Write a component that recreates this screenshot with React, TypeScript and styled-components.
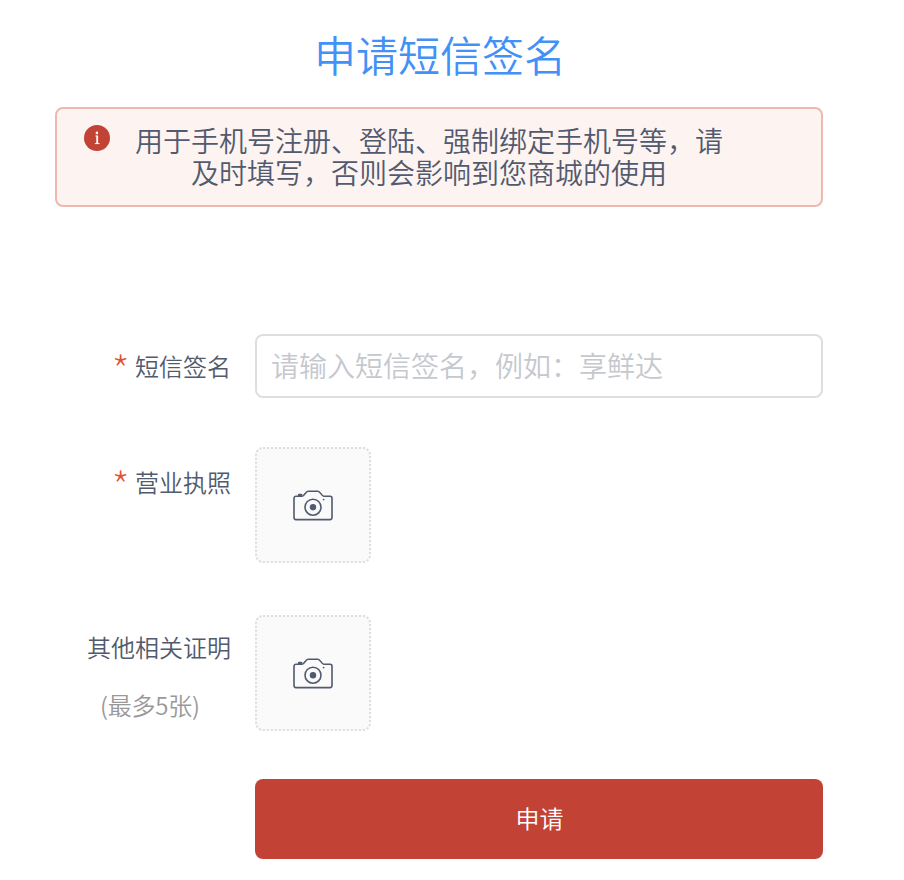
import React from 'react';
import styled, { createGlobalStyle } from 'styled-components';

const GlobalStyle = createGlobalStyle`
  * { box-sizing: border-box; }
  body {
    margin: 0;
    background: #fff;
    color: #515a6e;
    font-family: "Noto Sans CJK SC", sans-serif;
    font-weight: 350;
  }
`;

const Page = styled.main`
  width: 904px;
  height: 880px;
  padding: 29px 81px 0 55px;
  overflow: hidden;
`;

const Title = styled.h1`
  margin: 0;
  padding-left: 2px;
  height: 50px;
  font-size: 42px;
  line-height: 50px;
  font-weight: 350;
  text-align: center;
  color: #4391f7;
`;

const Alert = styled.section`
  display: flex;
  align-items: flex-start;
  height: 100px;
  margin-top: 28px;
  padding: 16px 0 0 27px;
  border: 2px solid #efb8ae;
  border-radius: 8px;
  background: #fdf3f1;
`;

const InfoBadge = styled.svg`
  display: block;
  width: 26px;
  height: 26px;
  flex: none;
`;

const AlertText = styled.p`
  width: 592px;
  margin: 0 0 0 23px;
  padding-top: 2px;
  font-family: "Liberation Sans", "Noto Sans CJK SC", sans-serif;
  font-size: 28px;
  line-height: 32px;
  text-align: center;
  white-space: nowrap;
`;

const Form = styled.form`
  margin-top: 127px;
`;

const Row = styled.div<{ $height: number }>`
  display: flex;
  gap: 24px;
  height: ${({ $height }) => $height}px;
`;

const LabelColumn = styled.div<{ $top: number }>`
  width: 176px;
  flex: none;
  padding-top: ${({ $top }) => $top}px;
`;

const Label = styled.label`
  display: flex;
  justify-content: flex-end;
  height: 32px;
  font-size: 24px;
  line-height: 32px;
`;

const Required = styled.span`
  margin-right: 5px;
  padding-top: 4px;
  font-size: 44px;
  font-weight: 100;
  color: #e2502f;
`;

const Hint = styled.div`
  padding-left: 45px;
  margin-top: 26px;
  font-size: 24px;
  line-height: 32px;
  letter-spacing: -0.2px;
  color: #999;
`;

const Input = styled.input`
  width: 568px;
  height: 64px;
  padding: 0 15px 3px 14px;
  border: 2px solid #dcdee2;
  border-radius: 8px;
  outline: none;
  background: #fff;
  color: #515a6e;
  font: inherit;
  font-size: 28px;

  &::placeholder {
    color: #c5c8ce;
    opacity: 1;
  }
`;

const Upload = styled.button`
  display: flex;
  align-items: center;
  justify-content: center;
  width: 116px;
  height: 116px;
  padding: 0;
  border: 2px dotted #dddddf;
  border-radius: 8px;
  background: #fafafa;
`;

const Submit = styled.button`
  display: block;
  width: 568px;
  height: 80px;
  margin-left: 200px;
  padding: 0 0 4px 1px;
  border: 0;
  border-radius: 8px;
  background: #c24335;
  color: #fff;
  font: inherit;
  font-size: 24px;
`;

const Camera = () => (
  <svg width="40" height="32" viewBox="0 0 40 32" fill="none" stroke="#515a6e" strokeWidth="1.6" strokeLinejoin="round">
    <path d="M3 7.2H9.3C11.3 7.2 12.8 2.2 15 2.2H25C27.2 2.2 28.5 7.2 30.8 7.2H37A2 2 0 0 1 39 9.2V28.6A2 2 0 0 1 37 30.6H3A2 2 0 0 1 1 28.6V9.2A2 2 0 0 1 3 7.2Z" />
    <circle cx="20" cy="18.2" r="8" />
    <circle cx="20" cy="18.2" r="3.2" fill="#515a6e" stroke="none" />
    <circle cx="30.6" cy="10.6" r="0.9" fill="#515a6e" stroke="none" />
    <path d="M6 6H8.2" strokeWidth="2.4" strokeLinecap="round" />
  </svg>
);

export default function App() {
  return (
    <>
      <GlobalStyle />
      <Page>
        <Title>申请短信签名</Title>
        <Alert>
          <InfoBadge viewBox="0 0 26 26">
            <circle cx="13" cy="13" r="13" fill="#c24335" />
            <circle cx="12.9" cy="7.9" r="1.3" fill="#fff" />
            <path d="M11.4 11H13.2" fill="none" stroke="#fff" strokeWidth="0.9" />
            <path d="M13.2 10.6V18.6" fill="none" stroke="#fff" strokeWidth="1.8" />
            <path d="M10.9 18.6H15.5" fill="none" stroke="#fff" strokeWidth="1" />
          </InfoBadge>
          <AlertText>
            用于手机号注册、登陆、强制绑定手机号等，请
            <br />
            及时填写，否则会影响到您商城的使用
          </AlertText>
        </Alert>
        <Form onSubmit={(event) => event.preventDefault()}>
          <Row $height={113}>
            <LabelColumn $top={16}>
              <Label htmlFor="signature"><Required>*</Required>短信签名</Label>
            </LabelColumn>
            <Input id="signature" placeholder="请输入短信签名，例如：享鲜达" />
          </Row>
          <Row $height={168}>
            <LabelColumn $top={19}>
              <Label><Required>*</Required>营业执照</Label>
            </LabelColumn>
            <Upload type="button" aria-label="营业执照"><Camera /></Upload>
          </Row>
          <Row $height={164}>
            <LabelColumn $top={16}>
              <Label>其他相关证明</Label>
              <Hint>(最多5张)</Hint>
            </LabelColumn>
            <Upload type="button" aria-label="其他相关证明"><Camera /></Upload>
          </Row>
          <Submit type="submit">申请</Submit>
        </Form>
      </Page>
    </>
  );
}
